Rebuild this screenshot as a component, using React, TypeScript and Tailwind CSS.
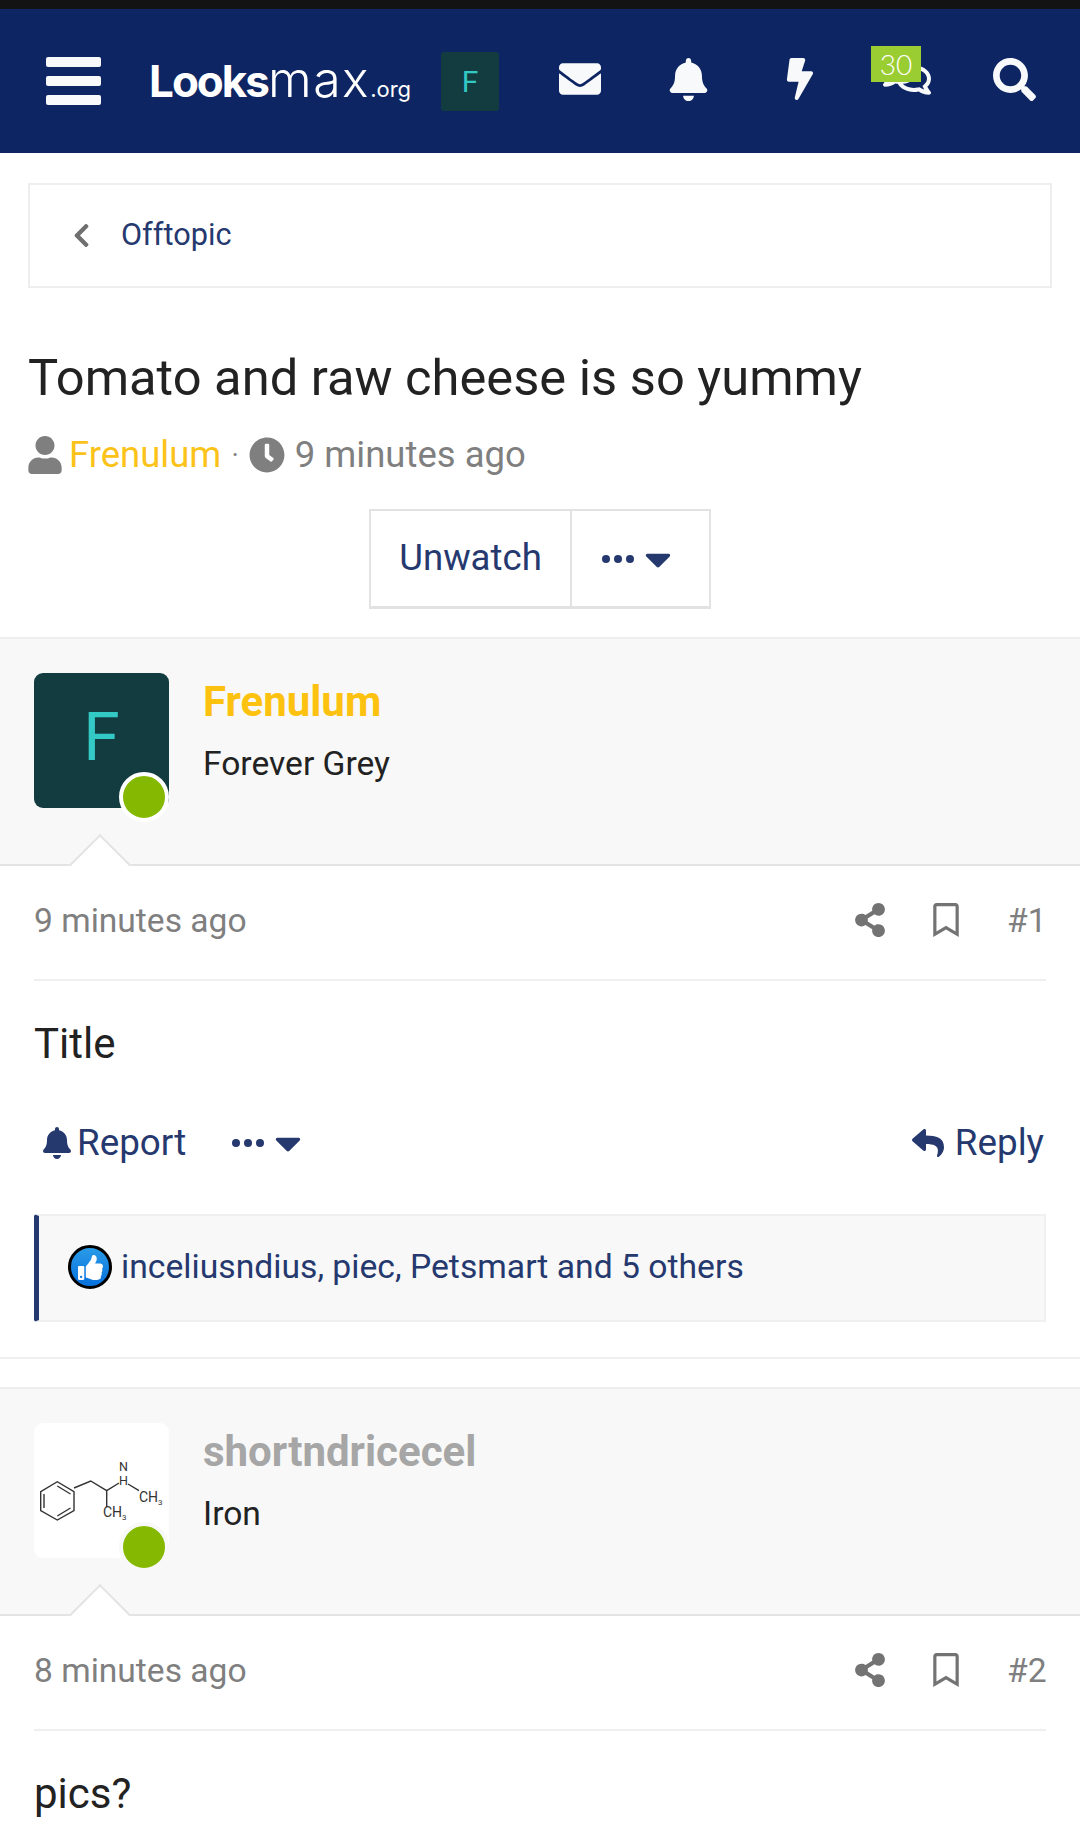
import { FaBell, FaBolt, FaCaretDown, FaChevronLeft, FaClock, FaEnvelope, FaRegBookmark, FaRegComments, FaReply, FaSearch, FaShareAlt, FaThumbsUp, FaUser } from "react-icons/fa";

function Header() {
    return (
        <div className="flex h-[144px] items-center bg-[#0d2663] pb-[4px] pl-[46px] text-[#f8f9fb]">
            <div className="mt-[4px] flex w-[55px] flex-col gap-[9px]">
                <div className="h-[10px] rounded-[2px] bg-[#f8f9fb]" />
                <div className="h-[10px] rounded-[2px] bg-[#f8f9fb]" />
                <div className="h-[10px] rounded-[2px] bg-[#f8f9fb]" />
            </div>
            <div className="ml-[48px] flex w-[262px] items-baseline whitespace-nowrap font-[Inter,sans-serif] leading-none text-white">
                <span className="text-[44px] font-bold tracking-[-2px]">Looks</span>
                <span className="text-[50px] font-light tracking-[1.500px]">max</span>
                <span className="text-[22px] font-normal">.org</span>
            </div>
            <div className="ml-[30px] mt-[4px] flex h-[59px] w-[58px] items-center justify-center rounded-[3px] bg-[#123c3f] text-[30px] text-[#33c9c4]">F</div>
            <FaEnvelope className="ml-[60px] text-[42px]" />
            <FaBell className="ml-[66px] text-[43px]" />
            <FaBolt className="ml-[69px] text-[42px]" />
            <div className="relative ml-[62px] h-[42px] w-[48px]">
                <FaRegComments className="absolute left-0 top-[-6px] text-[48px]" />
                <div className="absolute left-[-12px] top-[-12px] flex h-[36px] w-[50px] items-center justify-center bg-[#9acd32] font-[Lato,sans-serif] text-[28px] font-light text-white">30</div>
            </div>
            <FaSearch className="ml-[62px] text-[43px]" />
        </div>
    );
}

function Dots() {
    return (
        <div className="flex gap-[4px]">
            <div className="h-[8px] w-[8px] rounded-full bg-[#25396f]" />
            <div className="h-[8px] w-[8px] rounded-full bg-[#25396f]" />
            <div className="h-[8px] w-[8px] rounded-full bg-[#25396f]" />
        </div>
    );
}

function LikeIcon() {
    return (
        <div className="flex h-[44px] w-[44px] items-center justify-center rounded-full border-[3px] border-black bg-gradient-to-b from-[#2a9be8] to-[#0670dc]">
            <FaThumbsUp className="text-[25px] text-white" />
        </div>
    );
}

function Molecule() {
    return (
        <svg width="135" height="135" viewBox="0 0 135 135" fill="none" stroke="#333" strokeWidth="1.4">
            <path d="M6.700 68.700 L6.700 87.700 L23.300 97 L40 87.700 L40 68.700 L23.300 58.700 Z" />
            <path d="M10 71 L10 85 M23.300 63 L36.500 71 M23.300 93 L36.500 85" />
            <path d="M40 65 L56.700 58 L72.700 67.700 L85 60 M72.700 67.700 L72.700 84 M94 61 L105 67.700" />
            <text x="85" y="47.500" fontFamily="Roboto, sans-serif" fontSize="12.500" fill="#333" stroke="none">N</text>
            <text x="85" y="61.500" fontFamily="Roboto, sans-serif" fontSize="12.500" fill="#333" stroke="none">H</text>
            <text x="105" y="78.700" fontFamily="Roboto, sans-serif" fontSize="14" fill="#333" stroke="none">CH<tspan fontSize="8" dy="3">3</tspan></text>
            <text x="69" y="94.300" fontFamily="Roboto, sans-serif" fontSize="14" fill="#333" stroke="none">CH<tspan fontSize="8" dy="3">3</tspan></text>
        </svg>
    );
}

type UserBarProps = {
    name: string;
    title: string;
    nameColor: string;
    avatar: React.ReactNode;
    ring: string;
};

function UserBar({ name, title, nameColor, avatar, ring }: UserBarProps) {
    return (
        <div className="relative flex h-[229px] border-t-2 border-b-2 border-t-[#eeeeee] border-b-[#e3e3e3] bg-[#f8f8f8] pl-[34px] pt-[34px]">
            <div className="relative h-[135px] w-[135px]">
                {avatar}
                <div className={`absolute left-[85px] top-[99px] h-[50px] w-[50px] rounded-full border-[4px] bg-[#85b800] ${ring}`} />
            </div>
            <div className="ml-[34px]">
                <div className={`mt-[5px] text-[42px] font-bold leading-[47px] ${nameColor}`}>{name}</div>
                <div className="mt-[19px] text-[33.600px] leading-[40px] text-[#222222]">{title}</div>
            </div>
            <div className="absolute left-[78px] top-[204px] h-[44px] w-[44px] rotate-45 border-l-2 border-t-2 border-[#e3e3e3] bg-white" />
        </div>
    );
}

function PostHead({ time, num }: { time: string; num: string }) {
    return (
        <div className="mx-[34px] flex h-[115px] items-center border-b-2 border-[#efefef] pb-[2px] text-[33.600px] text-[#7f7f7f]">
            <div className="flex-1">{time}</div>
            <FaShareAlt className="mb-[3px] text-[34px] text-[#737373]" />
            <FaRegBookmark className="mb-[3px] ml-[42px] text-[34px] text-[#737373]" />
            <div className="ml-[44px] w-[39px] whitespace-nowrap">{num}</div>
        </div>
    );
}

export default function App() {
    return (
        <div className="h-[1825px] w-[1080px] overflow-hidden bg-white font-[Roboto,sans-serif]">
            <div className="h-[9px] bg-[#131313]" />
            <Header />

            <div className="mx-[28px] mt-[30px] flex h-[105px] items-center border-2 border-[#eeeeee] pl-[38px] text-[30.700px] text-[#25396f]">
                <FaChevronLeft className="text-[27px] text-[#6f6f6f]" />
                <span className="ml-[26px]">Offtopic</span>
            </div>

            <div className="ml-[28px] mt-[58px] text-[50.650px] leading-[64px] text-[#222222]">Tomato and raw cheese is so yummy</div>

            <div className="ml-[26px] mt-[20px] flex h-[50px] items-center text-[36.500px] text-[#7f7f7f]">
                <FaUser className="text-[38px]" />
                <span className="ml-[5px] text-[#fbc319]">Frenulum</span>
                <span className="mx-[10px] text-[28px]">·</span>
                <FaClock className="text-[36px]" />
                <span className="ml-[10px]">9 minutes ago</span>
            </div>

            <div className="mt-[29px] flex justify-center">
                <div className="flex h-[100px] w-[342px] border-2 border-b-[3px] border-[#e2e2e2] text-[36.600px] text-[#25396f]">
                    <div className="flex w-[201px] items-center justify-center border-r-2 border-[#e2e2e2]">Unwatch</div>
                    <div className="flex flex-1 items-center justify-center pr-[1px]">
                        <Dots />
                        <FaCaretDown className="ml-[3px] text-[42px]" />
                    </div>
                </div>
            </div>

            <div className="mt-[28px]">
                <UserBar
                    name="Frenulum"
                    title="Forever Grey"
                    nameColor="text-[#fdc20f]"
                    ring="border-white"
                    avatar={
                        <div className="flex h-[135px] w-[135px] items-center justify-center rounded-[9px] bg-[#123c3f] pb-[6px] text-[66px] text-[#33c9c4]">F</div>
                    }
                />
                <PostHead time="9 minutes ago" num="#1" />
                <div className="ml-[34px] mt-[40px] text-[42px] leading-[46px] text-[#222222]">Title</div>

                <div className="mx-[34px] mt-[51px] flex h-[50px] items-center text-[36.800px] text-[#25396f]">
                    <FaBell className="ml-[7px] text-[32px]" />
                    <span className="ml-[4px]">Report</span>
                    <div className="ml-[46px]">
                        <Dots />
                    </div>
                    <FaCaretDown className="ml-[3px] text-[42px]" />
                    <div className="flex-1" />
                    <FaReply className="text-[32px]" />
                    <span className="ml-[11px] mr-[2px]">Reply</span>
                </div>

                <div className="mx-[34px] mt-[46px] flex h-[108px] items-center rounded-l-[3px] border-y-2 border-r-2 border-l-[5px] border-y-[#f0f0f0] border-r-[#f0f0f0] border-l-[#25396f] bg-[#f8f8f8] pb-[2px] pl-[29px] text-[33.700px] text-[#25396f]">
                    <LikeIcon />
                    <span className="ml-[9px]">inceliusndius, piec, Petsmart and 5 others</span>
                </div>

                <div className="mt-[35px] h-[2px] bg-[#efefef]" />
            </div>

            <div className="mt-[28px]">
                <UserBar
                    name="shortndricecel"
                    title="Iron"
                    nameColor="text-[#a6a6a6]"
                    ring="border-[#f8f8f8]"
                    avatar={
                        <div className="h-[135px] w-[135px] rounded-[9px] bg-white">
                            <Molecule />
                        </div>
                    }
                />
                <PostHead time="8 minutes ago" num="#2" />
                <div className="ml-[34px] mt-[40px] text-[42px] leading-[46px] text-[#222222]">pics?</div>
            </div>
        </div>
    );
}
